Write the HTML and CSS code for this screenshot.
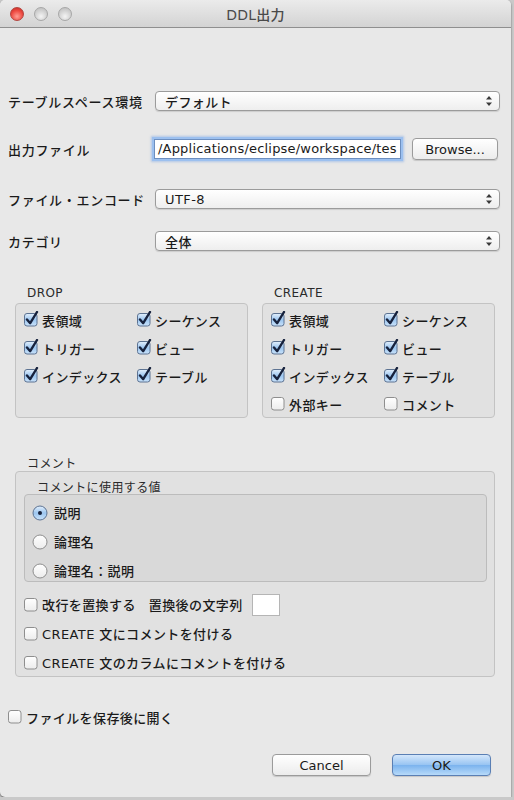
FILE: index.html
```html
<!DOCTYPE html>
<html lang="ja">
<head>
    <meta charset="UTF-8">
    <meta name="viewport" content="width=device-width, initial-scale=1.0">
    <title>DDL出力</title>
    <link rel="stylesheet" href="styles.css">
</head>
<body>
    <svg class="defs" width="0" height="0">
        <defs>
            <linearGradient id="aqua" x1="0" y1="0" x2="0" y2="1">
                <stop offset="0" stop-color="#e4f0fc"/>
                <stop offset="0.5" stop-color="#9cc6f0"/>
                <stop offset="1" stop-color="#c9e2fa"/>
            </linearGradient>
            <linearGradient id="plain" x1="0" y1="0" x2="0" y2="1">
                <stop offset="0" stop-color="#ffffff"/>
                <stop offset="1" stop-color="#ececec"/>
            </linearGradient>
            <symbol id="box-on" viewBox="0 0 16 16">
                <rect x="1.5" y="2.5" width="12.5" height="12.5" rx="2.5" fill="url(#aqua)" stroke="#5d7392"/>
                <path d="M4 8.5 L7.2 12.2 L14 1" fill="none" stroke="#17223d" stroke-width="2.4" stroke-linecap="round" stroke-linejoin="round"/>
            </symbol>
            <symbol id="box-off" viewBox="0 0 16 16">
                <rect x="1.5" y="2.5" width="12.5" height="12.5" rx="2.5" fill="url(#plain)" stroke="#8e8e8e"/>
            </symbol>
            <symbol id="radio-on" viewBox="0 0 16 16">
                <circle cx="8" cy="8" r="7" fill="url(#aqua)" stroke="#5d7392"/>
                <circle cx="8" cy="8" r="2" fill="#17223d"/>
            </symbol>
            <symbol id="radio-off" viewBox="0 0 16 16">
                <circle cx="8" cy="8" r="7" fill="url(#plain)" stroke="#8e8e8e"/>
            </symbol>
            <symbol id="updown" viewBox="0 0 8 12">
                <path d="M4 1 L7 4.5 L1 4.5 Z M4 11 L7 7.5 L1 7.5 Z" fill="#3a3a3a"/>
            </symbol>
        </defs>
    </svg>

    <div class="window">
        <div class="titlebar">
            <div class="lights">
                <span class="light light-close"></span>
                <span class="light"></span>
                <span class="light"></span>
            </div>
            <div class="title">DDL出力</div>
        </div>

        <div class="content">
            <div class="form">
                <div class="row">
                    <label class="row-label">テーブルスペース環境</label>
                    <div class="select">デフォルト<svg class="arrows"><use href="#updown"/></svg></div>
                </div>
                <div class="row row-file">
                    <label class="row-label">出力ファイル</label>
                    <div class="textfield">/Applications/eclipse/workspace/tes</div>
                    <div class="button browse">Browse...</div>
                </div>
                <div class="row">
                    <label class="row-label">ファイル・エンコード</label>
                    <div class="select">UTF-8<svg class="arrows"><use href="#updown"/></svg></div>
                </div>
                <div class="row row-category">
                    <label class="row-label">カテゴリ</label>
                    <div class="select">全体<svg class="arrows"><use href="#updown"/></svg></div>
                </div>
            </div>

            <div class="groups">
                <div class="group">
                    <div class="legend">DROP</div>
                    <div class="box checks">
                        <div class="item"><svg class="mark"><use href="#box-on"/></svg>表領域</div>
                        <div class="item"><svg class="mark"><use href="#box-on"/></svg>シーケンス</div>
                        <div class="item"><svg class="mark"><use href="#box-on"/></svg>トリガー</div>
                        <div class="item"><svg class="mark"><use href="#box-on"/></svg>ビュー</div>
                        <div class="item"><svg class="mark"><use href="#box-on"/></svg>インデックス</div>
                        <div class="item"><svg class="mark"><use href="#box-on"/></svg>テーブル</div>
                    </div>
                </div>
                <div class="group">
                    <div class="legend">CREATE</div>
                    <div class="box checks">
                        <div class="item"><svg class="mark"><use href="#box-on"/></svg>表領域</div>
                        <div class="item"><svg class="mark"><use href="#box-on"/></svg>シーケンス</div>
                        <div class="item"><svg class="mark"><use href="#box-on"/></svg>トリガー</div>
                        <div class="item"><svg class="mark"><use href="#box-on"/></svg>ビュー</div>
                        <div class="item"><svg class="mark"><use href="#box-on"/></svg>インデックス</div>
                        <div class="item"><svg class="mark"><use href="#box-on"/></svg>テーブル</div>
                        <div class="item"><svg class="mark"><use href="#box-off"/></svg>外部キー</div>
                        <div class="item"><svg class="mark"><use href="#box-off"/></svg>コメント</div>
                    </div>
                </div>
            </div>

            <div class="comment">
                <div class="legend">コメント</div>
                <div class="box comment-box">
                    <div class="legend">コメントに使用する値</div>
                    <div class="box inner-box">
                        <div class="radio"><svg class="dot"><use href="#radio-on"/></svg>説明</div>
                        <div class="radio"><svg class="dot"><use href="#radio-off"/></svg>論理名</div>
                        <div class="radio"><svg class="dot"><use href="#radio-off"/></svg>論理名：説明</div>
                    </div>
                    <div class="option option-first">
                        <svg class="mark"><use href="#box-off"/></svg>改行を置換する
                        <span class="replace-label">置換後の文字列</span>
                        <div class="small-field"></div>
                    </div>
                    <div class="option"><svg class="mark"><use href="#box-off"/></svg>CREATE 文にコメントを付ける</div>
                    <div class="option"><svg class="mark"><use href="#box-off"/></svg>CREATE 文のカラムにコメントを付ける</div>
                </div>
            </div>

            <div class="open-after"><svg class="mark"><use href="#box-off"/></svg>ファイルを保存後に開く</div>

            <div class="actions">
                <div class="button">Cancel</div>
                <div class="button default">OK</div>
            </div>
        </div>
    </div>
</body>
</html>
```

FILE: styles.css
```css
/* Desktop behind the dialog */
body {
    margin: 0;
    background: #c9c9c9;
    font-family: "DejaVu Sans", "Noto Sans CJK JP", sans-serif;
    font-size: 13px;
    font-weight: 500;
    letter-spacing: 0.4px;
    color: #1a1a1a;
}

.defs {
    position: absolute;
    width: 0;
    height: 0;
}

/* Window frame */
.window {
    width: 511px;
    height: 797px;
    background: #e8e8e8;
    border-radius: 5px 5px 0 5px;
    box-shadow: 0 1px 2px rgba(0, 0, 0, 0.55);
    overflow: hidden;
}

.titlebar {
    height: 27px;
    display: flex;
    align-items: center;
    background: linear-gradient(#ebebeb, #d3d3d3);
    border-bottom: 1px solid #8f8f8f;
    position: relative;
}

.lights {
    display: flex;
    gap: 10px;
    padding-left: 10px;
}

.light {
    width: 12px;
    height: 12px;
    border-radius: 50%;
    border: 1px solid #a7a7a7;
    background: radial-gradient(circle at 50% 70%, #f4f4f4 0%, #d2d2d2 55%, #b9b9b9 100%);
}

.light-close {
    border-color: #b3443e;
    background: radial-gradient(circle at 50% 70%, #ff9d93 0%, #ee4b42 55%, #c1271f 100%);
}

.title {
    position: absolute;
    left: 0;
    right: 0;
    text-align: center;
    color: #4a4a4a;
    font-size: 14px;
    letter-spacing: 0.2px;
}

.content {
    padding: 0 11px 0 8px;
}

/* Top form rows */
.form {
    padding-top: 61px;
}

.row {
    display: flex;
    align-items: center;
    height: 24px;
    margin-bottom: 24px;
}

.row-file {
    margin-top: 2px;
    margin-bottom: 26px;
}

.row-category {
    margin-top: -6px;
}

.row-label {
    width: 145px;
    flex: none;
    letter-spacing: 0.7px;
}

.select {
    flex: 1;
    height: 18px;
    margin-left: 2px;
    padding-left: 9px;
    display: flex;
    align-items: center;
    border: 1px solid #9b9b9b;
    border-radius: 4px;
    background: linear-gradient(#ffffff, #eeeeee);
    box-shadow: 0 1px 1px rgba(0, 0, 0, 0.12);
}

.arrows {
    width: 8px;
    height: 12px;
    margin-left: auto;
    margin-right: 6px;
}

.textfield {
    width: 242px;
    height: 18px;
    line-height: 18px;
    margin-left: 1px;
    padding-left: 3px;
    background: #fff;
    border: 1px solid #6d8fc0;
    box-shadow: 0 0 0 2px #9cc0ef, 0 0 2px 3px rgba(120, 165, 230, 0.5);
    white-space: nowrap;
    letter-spacing: 0.2px;
}

.button {
    height: 20px;
    display: flex;
    align-items: center;
    justify-content: center;
    border: 1px solid #9b9b9b;
    border-radius: 4px;
    background: linear-gradient(#ffffff, #ececec);
    box-shadow: 0 1px 1px rgba(0, 0, 0, 0.15);
    letter-spacing: 0;
}

.browse {
    width: 84px;
    margin-left: auto;
    margin-right: 2px;
}

/* DROP / CREATE groups */
.groups {
    display: flex;
    gap: 14px;
    padding-left: 7px;
    margin-top: 33px;
}

.group {
    width: 233px;
}

.legend {
    height: 17px;
    padding-left: 12px;
    font-size: 12px;
    font-weight: 400;
    color: #2a2a2a;
}

.box {
    box-sizing: border-box;
    border: 1px solid #c3c3c3;
    border-radius: 4px;
    background: #e1e1e1;
}

.checks {
    height: 115px;
    padding: 2px 0 0 8px;
    display: grid;
    grid-template-columns: 113px 1fr;
    grid-auto-rows: 28px;
}

.item,
.option,
.radio,
.open-after {
    display: flex;
    align-items: center;
    white-space: nowrap;
}

.mark {
    width: 16px;
    height: 16px;
    margin: -2px 3px 0 -1px;
    flex: none;
}

/* Comment section */
.comment {
    padding-left: 7px;
    width: 480px;
    margin-top: 36px;
}

.comment-box {
    padding: 6px 7px 0 8px;
    height: 206px;
}

.comment-box > .legend {
    padding-left: 13px;
    height: 16px;
}

.inner-box {
    height: 88px;
    padding: 3px 0 0 7px;
    background: #d9d9d9;
    border-color: #bcbcbc;
}

.radio {
    height: 29px;
}

.dot {
    width: 16px;
    height: 16px;
    margin-right: 6px;
}

.option {
    height: 29px;
}

.option-first {
    margin-top: 8px;
}

.replace-label {
    margin-left: 13px;
}

.small-field {
    width: 26px;
    height: 20px;
    margin-left: 9px;
    background: #fff;
    border: 1px solid #b5b5b5;
}

.open-after {
    height: 20px;
    margin-top: 30px;
}

/* Dialog buttons */
.actions {
    display: flex;
    justify-content: flex-end;
    gap: 21px;
    margin-top: 27px;
    padding-right: 9px;
}

.actions .button {
    width: 97px;
}

.default {
    border-color: #5a7fb4;
    background: linear-gradient(#d4e7fb, #97c4f2 50%, #7bb3ee 51%, #b7daf9);
}
```
